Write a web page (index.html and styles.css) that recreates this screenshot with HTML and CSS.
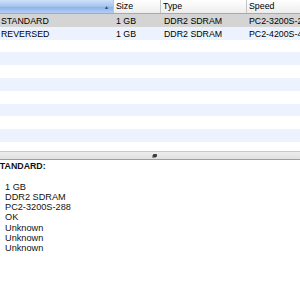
FILE: index.html
```html
<!DOCTYPE html>
<html lang="en">
<head>
    <meta charset="UTF-8">
    <title>Memory</title>
    <link rel="stylesheet" href="styles.css">
</head>
<body>
    <div class="browser">
        <!-- column header -->
        <div class="head">
            <div class="col sorted">
                <span></span>
                <span class="arrow">&#9650;</span>
            </div>
            <div class="col">Size</div>
            <div class="col">Type</div>
            <div class="col">Speed</div>
        </div>

        <div class="list">
            <div class="row selected">
                <div class="cell">STANDARD</div>
                <div class="cell">1 GB</div>
                <div class="cell">DDR2 SDRAM</div>
                <div class="cell">PC2-3200S-288</div>
            </div>
            <div class="row">
                <div class="cell">REVERSED</div>
                <div class="cell">1 GB</div>
                <div class="cell">DDR2 SDRAM</div>
                <div class="cell">PC2-4200S-444</div>
            </div>
            <div class="row"></div>
            <div class="row"></div>
            <div class="row"></div>
            <div class="row"></div>
            <div class="row"></div>
            <div class="row"></div>
            <div class="row"></div>
            <div class="row"></div>
            <div class="row"></div>
        </div>

        <div class="splitter"><span class="grip"></span></div>

        <div class="details">
            <div class="title">STANDARD:</div>
            <div class="line">&nbsp;</div>
            <div class="line">1 GB</div>
            <div class="line">DDR2 SDRAM</div>
            <div class="line">PC2-3200S-288</div>
            <div class="line">OK</div>
            <div class="line">Unknown</div>
            <div class="line">Unknown</div>
            <div class="line">Unknown</div>
        </div>
    </div>
</body>
</html>
```

FILE: styles.css
```css
body {
    margin: 0;
    font-family: 'Liberation Sans', Arial, sans-serif;
    background: #fff;
    color: #000;
}

.browser {
    width: 300px;
    height: 300px;
    overflow: hidden;
}

.head,
.row {
    display: grid;
    grid-template-columns: 113px 47px 86px 1fr;
}

.head {
    height: 13px;
    border-bottom: 1px solid #a9a9a9;
    background: linear-gradient(#ffffff, #ededed);
    font-size: 8.8px;
    line-height: 13px;
}

.col {
    padding-left: 2px;
    border-left: 1px solid #c4c4c4;
    white-space: nowrap;
    overflow: hidden;
}

.col:first-child {
    border-left: none;
}

.col.sorted {
    display: flex;
    justify-content: space-between;
    background: linear-gradient(#cfe1f8, #a4c3ee 50%, #8ab0e6 51%, #b3cef3);
}

.arrow {
    font-size: 5px;
    color: #2a4d7e;
    padding-right: 4px;
    line-height: 14px;
}

.list {
    height: 137px;
    overflow: hidden;
}

.row {
    height: 12.8px;
    font-size: 8.8px;
    line-height: 15px;
}

.row:nth-child(even) {
    background: #edf3fe;
}

.row.selected {
    background: #d4d4d4;
}

.cell {
    white-space: nowrap;
    overflow: hidden;
    padding-left: 3px;
}

.cell:first-child {
    padding-left: 1px;
}

.cell:nth-child(3) {
    padding-left: 4px;
}

.splitter {
    height: 7px;
    border-top: 1px solid #c9c9c9;
    border-bottom: 1px solid #9f9f9f;
    background: linear-gradient(#ececec, #e2e2e2);
    display: flex;
    justify-content: center;
    align-items: center;
}

.grip {
    width: 4px;
    height: 3px;
    background: #3a3a3a;
    border-radius: 1px;
    box-shadow: -1px 1px 0 #8a8a8a;
    margin-left: 10px;
}

.details {
    padding: 1px 0 0 5px;
    font-size: 9.2px;
    line-height: 10.3px;
    color: #111;
}

.title {
    font-weight: bold;
    font-size: 8.8px;
    margin-left: -11px;
}
```
